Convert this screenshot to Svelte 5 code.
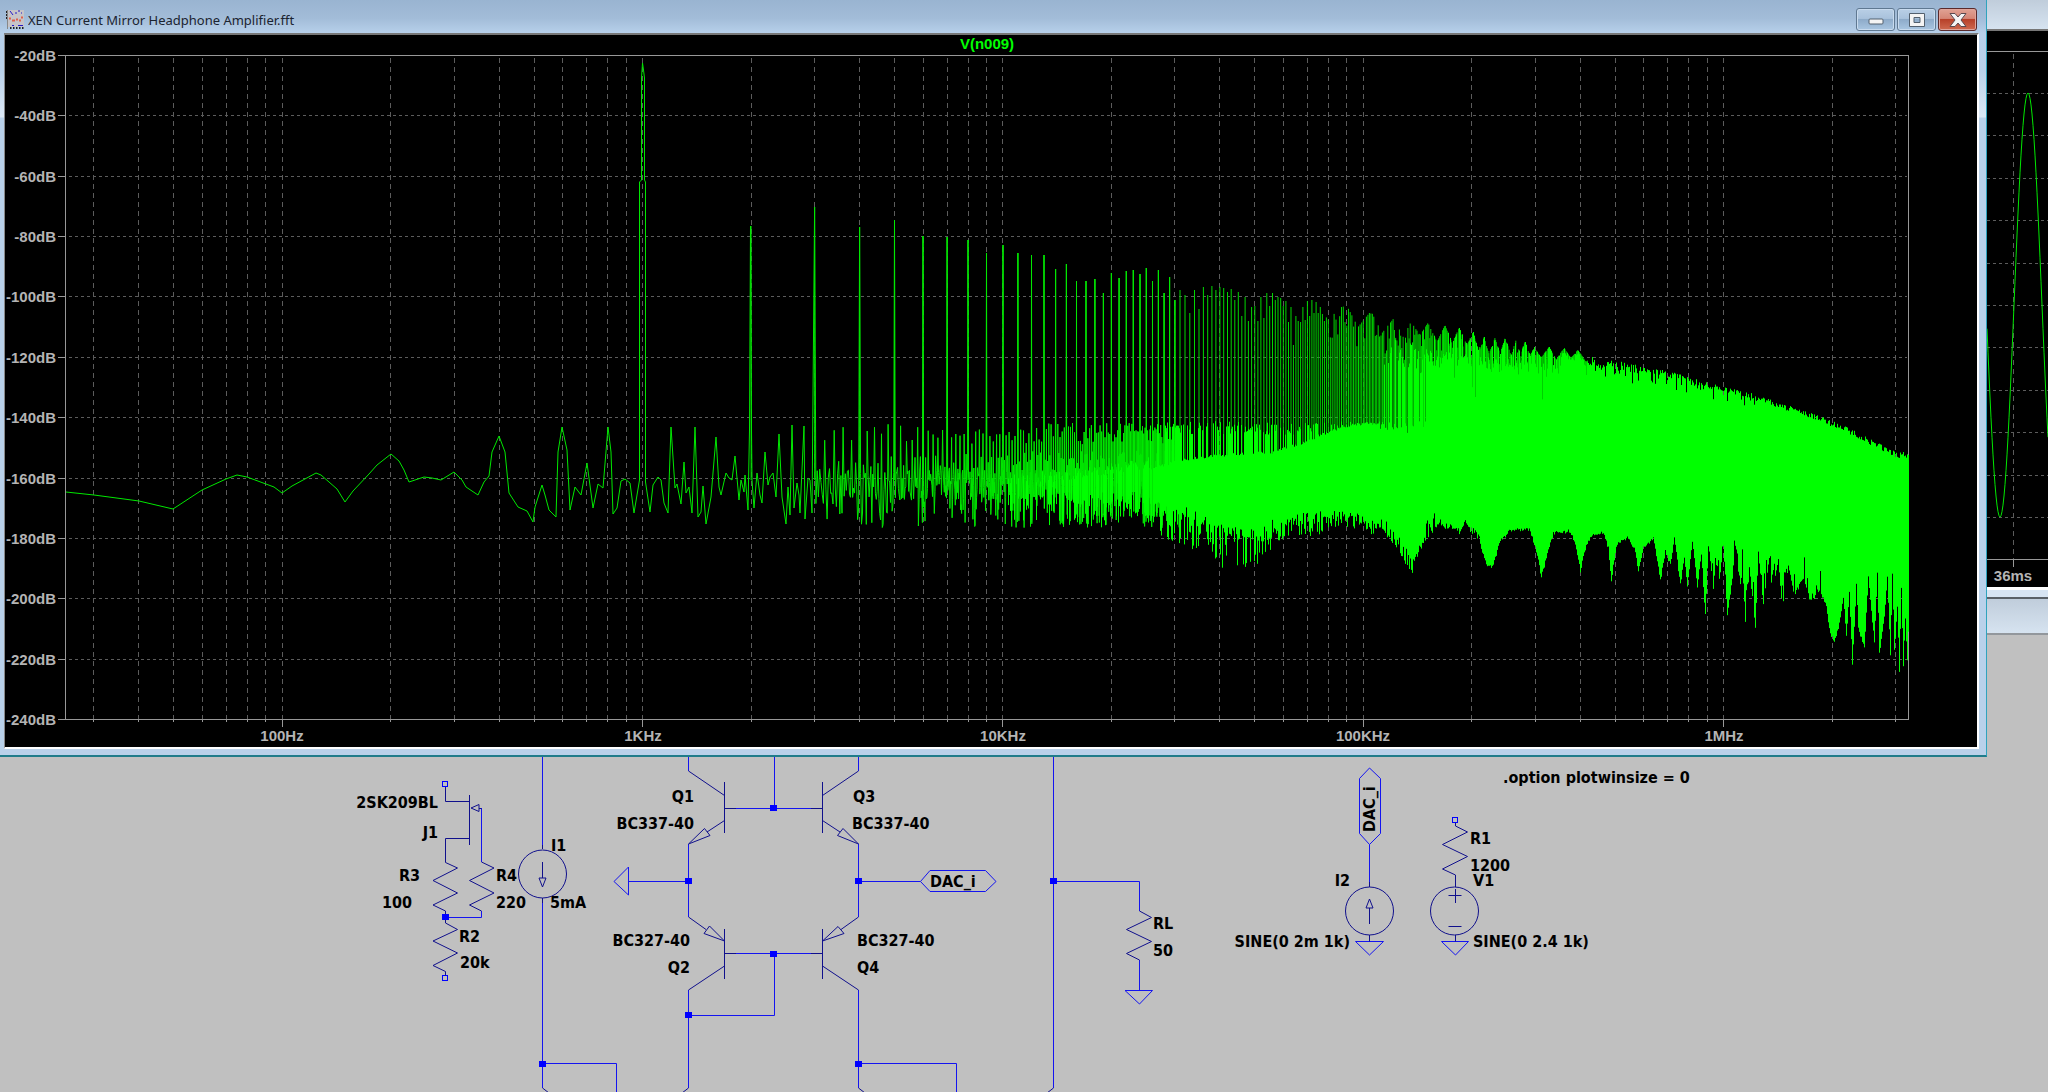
<script>
  const LEFT = 60;
  const TOP = 20;
  const PLOT_H = 664;
  const TRACE_W = 1844;
  const DECADE = 360.3;

  let canvasWidth = $state(1972);
  let plotWidth = $derived(Math.max(canvasWidth - 128, 200));
  let scale = $derived(plotWidth / TRACE_W);

  const freqX = (f) => (Math.log10(f) - Math.log10(24.93)) * DECADE;

  const dbLabels = Array.from({ length: 12 }, (_, i) => ({
    text: `${-20 - i * 20}dB`,
    y: TOP + Math.round((i * PLOT_H) / 11) + 0.5
  }));

  const grid = [];
  for (const base of [10, 100, 1e3, 1e4, 1e5, 1e6]) {
    for (let m = 1; m < 10; m++) {
      const f = base * m;
      if (f > 26 && f < 3.2e6) grid.push({ x: freqX(f), major: m === 1, f });
    }
  }
  const freqNames = { 100: '100Hz', 1000: '1KHz', 10000: '10KHz', 100000: '100KHz', 1000000: '1MHz' };

  let seed = 20931;
  const rnd = () => {
    seed = (seed * 1103515245 + 12345) % 2147483648;
    return seed / 2147483648;
  };

  const at = (table, x) => {
    if (x <= table[0][0]) return table[0][1];
    for (let i = 1; i < table.length; i++) {
      if (x <= table[i][0]) {
        const [x0, y0] = table[i - 1];
        const [x1, y1] = table[i];
        return y0 + ((y1 - y0) * (x - x0)) / (x1 - x0);
      }
    }
    return table[table.length - 1][1];
  };

  // Samples of the slow part of the spectrum, below 3 kHz.
  const low = [
    [66,492],[94,495],[139,501],[173,509],[202,490],[226,479],[237,475],[247,477],[274,487],[282,493],[292,486],[316,473],[321,475],[337,489],[345,502],
    [353,491],[369,474],[377,465],[391,454],[399,461],[404,470],[409,482],[424,477],[432,478],[441,480],[454,472],[462,480],[466,487],[478,495],[484,482],
    [489,476],[492,452],[499,436],[505,452],[509,493],[518,507],[527,511],[533,522],[535,507],[542,485],[545,495],[549,510],[556,517],[558,452],[562,427],
    [567,450],[570,510],[575,487],[581,495],[587,463],[593,508],[598,484],[603,488],[608,427],[611,452],[613,514],[617,508],[621,481],[625,479],[630,483],
    [634,513],[639.5,480],[639.5,182],[641.5,180],[641.5,78],[642.5,63],[643.5,70],[644.5,78],[644.5,180],[645.5,182],[645.5,482],[650,512],[653,485],
    [658,477],[661,480],
    [664,503],[668,513],[671,427],[675,488],[677,484],[681,504],[684,462],[686,493],[689,487],[692,513],[695,427],[698,517],[701,512],[703,486],[706,524],
    [711,497],[716,437],[719,487],[721,495],[726,473],[729,478],[732,480],[735,456],[739,500],[741,480],[744,492],[745,475],[748,510],[749.5,430],[750.5,226],
    [751.5,430],[752,480],[754,508],[757,473],[760,495],[762,503],[765,452],[768,485],[770,477],[773,473],[776,497],[779,434],[782,497],[786,524],[788,487],
    [790,515],[792,425],[794,508],[797,483],[799,495],[800,513],[804,426],[805,519],[808,478],[810,480],[812,513]
  ];

  const harmonicTops = [
    226,207,227,220,236,237,240,253,245,253,255,255,269,264,281,281,279,293,273,278,271,270,274,268,281,270,293,277,300,290,295,313,290,309,287,295,286,290,
    287,288,292,289,300,292,316,297,321,307,306,321,297,318,293,306,293,300,297,298,306,301,322,307,345,316,321,322,307,320,301,316,300,313,302,313,307,314,
    321
  ];

  const ceiling = [
    [1330,318],[1340,308],[1346,304],[1358,327],[1371,311],[1382,333],[1394,318],[1403,337],[1411,322],[1420,335],[1428,323],[1437,342],[1445,325],[1452,343],
    [1459,328],[1467,345],[1473,332],[1478,350],[1484,337],[1489,354],[1495,338],[1500,354],[1505,338],[1511,355],[1516,340],[1520,354],[1525,342],[1530,356],
    [1534,347],[1541,358],[1549,347],[1556,360],[1564,348],[1571,358],[1578,350],[1586,362],[1592,356],[1602,365],[1610,360],[1624,362],[1643,366],[1667,371],
    [1691,377],[1705,382],[1729,387],[1753,393],[1777,402],[1801,409],[1825,418],[1849,428],[1872,440],[1896,452],[1909,452]
  ];
  const coreTop = [
    [1003,484],[1060,482],[1120,474],[1150,468],[1175,460],[1200,456],[1250,451],[1270,452],[1300,442],[1330,430],[1355,423],[1400,420],[1420,390],[1430,358],
    [1440,351],[1470,352],[1500,358],[1560,362],[1600,364],[1643,371],[1691,381],[1729,391],[1777,405],[1825,421],[1872,443],[1896,454],[1909,454]
  ];
  const coreBottom = [[1003,497],[1120,498],[1160,500],[1190,508],[1215,522],[1250,524],[1280,518],[1300,513],[1335,509],[1360,514],[1380,524]];
  const floor = [
    [1003,525],[1131,529],[1158,537],[1171,543],[1198,551],[1216,564],[1223,573],[1231,584],[1238,570],[1260,565],[1265,553],[1283,542],[1292,533],[1312,540],
    [1329,527],[1348,530],[1362,527],[1371,537],[1379,528],[1395,547],[1403,562],[1412,573],[1419,553],[1429,537],[1438,527],[1459,537],[1465,527],[1479,543],
    [1486,567],[1492,569],[1500,543],[1510,532],[1529,531],[1536,553],[1541,579],[1548,553],[1553,535],[1570,533],[1576,550],[1580,573],[1586,547],[1591,537],
    [1603,535],[1608,550],[1611,583],[1616,547],[1627,540],[1634,550],[1638,573],[1643,550],[1653,540],[1656,557],[1660,583],[1665,553],[1670,567],[1674,540],
    [1680,587],[1684,560],[1687,587],[1692,543],[1697,590],[1701,555],[1705,623],[1708,547],[1713,592],[1715,560],[1719,582],[1723,547],[1727,618],[1732,580],
    [1735,548],[1740,593],[1742,570],[1745,622],[1749,570],[1755,628],[1758,555],[1763,608],[1769,560],[1772,597],[1778,562],[1782,612],[1788,568],[1794,597],
    [1803,580],[1810,603],[1820,593],[1826,607],[1829,632],[1834,645],[1839,626],[1843,600],[1846,639],[1849,593],[1852,667],[1856,587],[1858,630],[1864,651],
    [1868,580],[1874,645],[1877,574],[1879,655],[1884,620],[1887,580],[1890,658],[1892,574],[1894,653],[1897,610],[1899,673],[1901,590],[1903,667],[1905,620],
    [1907,664],[1909,607]
  ];

  const p = (x, y) => `${(x - 65).toFixed(1)} ${(y - 55).toFixed(1)}`;

  let line = 'M' + low.map(([x, y]) => p(x, y)).join('L');
  for (let n = 120; n < 1240; n++) {
    const f = n * 25;
    const x = 65 + freqX(f);
    let y = 470 + rnd() * 30;
    if (rnd() < 0.25) y = 496 + rnd() * 32;
    if (f % 200 === 0) y = 423 + rnd() * 22;
    else if (f % 100 === 0) y = 450 + rnd() * 25;
    if (f % 1000 === 0) y = harmonicTops[f / 1000 - 2];
    line += 'L' + p(x, y);
  }

  let spikes = '';
  for (let k = 2; k < 420; k++) {
    const x = 65 + freqX(k * 1000);
    const top =
      k - 2 < harmonicTops.length ? harmonicTops[k - 2] : x < 1330 ? 303 + rnd() * 22 : at(ceiling, x) + (rnd() < 0.5 ? rnd() * 26 : 0);
    spikes += `M${p(x, top)}V425`;
  }

  let mass = '';
  for (let x = 1003; x < 1909; x++) {
    if (x < 1170 && rnd() > 0.25 + ((x - 1003) / 167) * 0.7) continue;
    const cTop = at(coreTop, x);
    const cBottom = at(coreBottom, x);
    const edge = at(floor, x);
    let top = cTop + rnd() * 3;
    let bottom = edge;
    if (x < 1150) {
      top = cTop - rnd() * 12;
    } else if (x < 1380) {
      if (rnd() < 0.6) top = Math.min(top, 421 + rnd() * 14);
    } else if (x < 1432) {
      top = rnd() < 0.15 + (x - 1380) / 62 ? at(ceiling, x) + 18 + rnd() * 22 : 421 + rnd() * 12;
    } else if (x < 1560) {
      if (rnd() < 0.5) top = at(ceiling, x);
      else top += rnd() * 14;
      if (rnd() < 0.06) top = cTop + rnd() * 50;
    } else {
      top = at(ceiling, x) + rnd() * 6;
      if (x < 1760 && rnd() < 0.25) top += rnd() * 14;
    }
    if (x < 1380) bottom = cBottom + (edge - cBottom) * (rnd() < 0.6 ? 0.3 + rnd() * 0.7 : rnd() * 0.35);
    else if (x < 1440) bottom -= rnd() * 20 * (rnd() < 0.5 ? 1 : 0.2);
    else if (x < 1480) bottom -= rnd() * 9;
    else bottom -= rnd() * 4;
    if (x > 1690 && x < 1830 && rnd() < 0.3) bottom -= rnd() * 25;
    mass += `M${p(x + 0.5, top)}V${(bottom - 55).toFixed(1)}`;
  }

  let sine = '';
  for (let x = 0; x <= 61; x++) {
    sine += `${x ? 'L' : 'M'}${x} ${(274 + 212 * Math.cos(((x - 13) * Math.PI) / 28)).toFixed(1)}`;
  }
  const sideRows = Array.from({ length: 11 }, (_, i) => Math.round(62 + i * 42.4) + 0.5);

  const joints = [[542.5,313.5],[445.5,167],[688.5,131],[688.5,265],[774,58],[774,203.5],[858.5,131],[858.5,313.5],[1053.5,131]];
  const pins = [[445,33.5],[445,228],[1455,70]];
  const labels = [
    ['2SK209BL',438,58,1],['J1',438,88,1],['R3',420,131,1],['100',412,158,1],['R4',496,131,0],['220',496,158,0],['I1',551,101,0],['5mA',550,158,0],
    ['R2',459,192,0],['20k',460,218,0],['Q1',694,52,1],['BC337-40',694,79,1],['Q3',853,52,0],['BC337-40',852,79,0],['BC327-40',690,196,1],['Q2',690,223,1],
    ['BC327-40',857,196,0],['Q4',857,223,0],['DAC_i',930,137,0],['RL',1153,179,0],['50',1153,206,0],['I2',1350,136,1],['SINE(0 2m 1k)',1350,197,1],
    ['R1',1470,94,0],['1200',1470,121,0],['V1',1473,136,0],['SINE(0 2.4 1k)',1473,197,0],['.option plotwinsize = 0',1503,33,0]
  ];
</script>

<main>
  <div class="windows">
    <section class="window" aria-label="XEN Current Mirror Headphone Amplifier.fft">
      <header>
        <svg class="doc" width="18" height="20" viewBox="0 0 18 20" aria-hidden="true">
          <path d="M2 0H18V17H2z" fill="#c6c4c8" />
          <path d="M0 2h2M0 5h2M0 8h2" stroke="#222" stroke-width="2" />
          <path d="M1.500 0V19" stroke="#888" />
          <path d="M4 1l3 4M9 3h2M12 1h2M15 3h1M6 15.500h2M12 15.500h5" stroke="#2418c8" fill="none" />
          <path d="M3 8.500h2M6 10.500h3M10 9.500h2M13 10.500h2M15 7.500h2" stroke="#e0604c" stroke-width="2" />
          <path d="M4 18h14" stroke="#222" stroke-width="2" stroke-dasharray="1.500 1.500" />
        </svg>
        <h1>XEN Current Mirror Headphone Amplifier.fft</h1>
        <button type="button" aria-label="Minimize">
          <svg width="16" height="16" viewBox="0 0 16 16"><rect x="1" y="7" width="14" height="5" rx="1" fill="#f4f4f4" stroke="#53606e" /></svg>
        </button>
        <button type="button" aria-label="Maximize">
          <svg width="16" height="16" viewBox="0 0 16 16"><path fill-rule="evenodd" d="M.5 1.500h15v13H.500zM5 5.500v5h6v-5z" fill="#f4f4f4" stroke="#53606e" /></svg>
        </button>
        <button type="button" class="close" aria-label="Close">
          <svg width="18" height="16" viewBox="0 0 18 16"><path d="M1 1.500h5l3 3.500 3-3.500h5L12 8l5 6.500h-5L9 11l-3 3.500H1L6 8z" fill="#f4f4f4" stroke="#5a4a50" /></svg>
        </button>
      </header>
      <div class="canvas" bind:clientWidth={canvasWidth}>
        <svg width="100%" height="712" role="img" aria-label="FFT of V(n009)">
          <text class="trace-name" x={LEFT + plotWidth / 2} y="14" text-anchor="middle">V(n009)</text>
          {#each grid as g}
            <path class="dash-v" d="M{Math.floor(LEFT + g.x * scale) + 0.5} {TOP + 3}V{TOP + PLOT_H}" />
            <path class="axis" d="M{Math.floor(LEFT + g.x * scale) + 0.5} {TOP + PLOT_H}v{g.major ? 8 : 3}" />
            {#if g.major}
              <text class="scale" x={Math.round(LEFT + g.x * scale)} y="706" text-anchor="middle">{freqNames[g.f]}</text>
            {/if}
          {/each}
          {#each dbLabels as l, i}
            {#if i > 0 && i < 11}
              <path class="dash-h" d="M{LEFT + 4} {l.y}H{LEFT + plotWidth - 2}" />
            {/if}
            <path class="axis" d="M{LEFT - 7} {l.y}h8" />
            <text class="scale" x="51" y={l.y + 5} text-anchor="end">{l.text}</text>
          {/each}
          <rect class="axis" x={LEFT + 0.5} y={TOP + 0.5} width={plotWidth - 1} height={PLOT_H} />
          <svg x={LEFT} y={TOP} width={plotWidth} height={PLOT_H} viewBox="0 0 {TRACE_W} {PLOT_H}" preserveAspectRatio="none">
            <path class="spikes" d={spikes} />
            <path class="line" d={line} />
            <path class="mass" d={mass} />
          </svg>
        </svg>
      </div>
    </section>

    <aside>
      <div class="side-title"></div>
      <svg width="61" height="556" role="img" aria-label="Waveform plot">
        <path class="dash-v" d="M26.500 23V528" />
        {#each sideRows as y}
          <path class="dash-h" d="M0 {y}H61" />
        {/each}
        <path class="axis" d="M0 20.500H61M0 528.500H61M26.500 528v8" />
        <path class="line" d={sine} />
        <text class="scale" x="26" y="550" text-anchor="middle">36ms</text>
      </svg>
      <div class="side-edge"></div>
      <div class="side-title lower"></div>
    </aside>
  </div>

  <svg class="schematic" width="100%" height="335" role="img" aria-label="Amplifier schematic">
    <g transform="translate(0 -7)">
      <path class="wire" d="M542.500 7V95M542.500 148V338M542.500 313.500H616.500V343M481.500 58V112M481.500 161V167.500H445.500M688.500 7V21M688.500 94V167M688.500 131.500H628M628.500 117V145L614 131.500zM774.500 7V58M736 58.500H811M736 203.500H811M774.500 203.500V265.500H688.500M688.500 240V338M858.500 7V21M858.500 94V167M858.500 131.500H920.500L930 120.500H985.500L996 131.500L985.500 141.500H930L920.500 131.500M858.500 240V338M858.500 313.500H956.500V343M1053.500 7V338M1053.500 131.500H1139.500V161M1139.500 210V240.500M1125 240.500H1152.500L1139.500 254zM1369.500 18L1380.500 28.500V83.500L1369.500 94.500L1359.500 83.500V28.500zM1369.500 94.500V132M1355.500 191.500H1383.500L1369.500 205zM1441.500 191.500H1468.500L1455.500 205z" />
      <path class="part" d="M445.500 36V51.500H469.500M469.500 45V95M469.500 88.500H445.500V112.500L457.500 118L433 130.500L457.500 143L433 155L445.500 161V173L457.500 179.500L433 191L457.500 203L433 215.500L445.500 221.500V226M471 58L479 54.500V61.500zM479 58.500H481.500M481.500 112L494 118L469.500 130.500L494 143L469.500 155L481.500 161M542.500 95V99M542.500 148V153M542.500 112V128M539 128H546L542.500 137zM542.500 338L549 343" />
      <circle class="part" cx="542.500" cy="124" r="24" />
      <path class="part" d="M688.500 21L724.500 45.500M724.500 32V83M724.500 58.500H736M724.500 70.500L707 82M688.500 94L704.500 78.500L710 85.500zM688.500 167L706 179.500M724.500 191L709.500 176L704 183.500zM724.500 179V229M724.500 203.500H736M724.500 216L688.500 240M688.500 338L682 343M858.500 21L822.500 45.500M822.500 32V83M822.500 58.500H811M822.500 70.500L840 82M858.500 94L843 78.500L837.500 85.500zM858.500 167L841 179.500M822.500 191L838 176.500L844 183.500zM822.500 179V229M822.500 203.500H811M822.500 216L858.500 240M858.500 338L865 343M1053.500 338L1047 343" />
      <path class="part" d="M1139.500 161L1151.500 167.500L1126.500 179.500L1151.500 191.500L1126.500 203.500L1139.500 210M1369.500 132V137M1369.500 185V191.500M1369.500 158V174M1366 158H1373L1369.500 149zM1455.500 72V76L1467.500 82L1442.500 94.500L1467.500 106.500L1442.500 119L1455.500 125V137M1448.500 145.500H1461.500M1455.500 139V153M1448.500 176.500H1461.500M1455.500 185V191.500" />
      <circle class="part" cx="1369.500" cy="161" r="24" />
      <circle class="part" cx="1454.500" cy="161" r="24" />
      {#each joints as [x, y]}
        <rect class="joint" x={Math.round(x) - 4} y={Math.round(y) - 3} width="7" height="6" />
      {/each}
      {#each pins as [x, y]}
        <rect class="pin" x={x - 2.5} y={Math.round(y) - 2.5} width="5" height="5" />
      {/each}
      {#each labels as [text, x, y, end]}
        <text {x} {y} text-anchor={end ? 'end' : 'start'}>{text}</text>
      {/each}
      <text transform="translate(1375 82) rotate(-90)">DAC_i</text>
    </g>
  </svg>
</main>

<style>
  :global(body) {
    margin: 0;
    background: #c0c0c0;
  }
  main {
    min-height: 100vh;
    display: flex;
    flex-direction: column;
    background: #c0c0c0;
    overflow: hidden;
    font-family: "Noto Sans", "Open Sans", sans-serif;
  }
  svg {
    display: block;
  }
  .windows {
    display: flex;
    align-items: flex-start;
  }
  .window {
    flex: 1;
    min-width: 0;
    box-sizing: border-box;
    padding: 0 7px 6px 4px;
    border-right: 1px solid #2fa3bd;
    border-bottom: 2px solid #1f7c8a;
    background: linear-gradient(#99b4d1 0, #a2bcd8 18px, #b7d0ea 33px, #b9d1ea 70px, #dce9f6 117px, #b9d1ea 118px);
  }
  header {
    height: 33px;
    box-sizing: border-box;
    padding: 6px 2px 0 2px;
    display: flex;
    align-items: center;
    gap: 2px;
  }
  h1 {
    flex: 1;
    margin: 0 0 0 2px;
    font-size: 13px;
    line-height: 20px;
    font-weight: 400;
    color: #1b2430;
    white-space: nowrap;
    overflow: hidden;
  }
  button {
    width: 39px;
    height: 23px;
    padding: 0;
    display: flex;
    align-items: center;
    justify-content: center;
    border: 1px solid #5f7891;
    border-radius: 3px;
    box-shadow: inset 0 0 0 1px #c9dbee;
    background: linear-gradient(#b9cfe6 0, #a9c2dc 45%, #8eabc9 50%, #a9c6e2 100%);
  }
  button.close {
    border-color: #5a2a2c;
    box-shadow: inset 0 0 0 1px #dfa59c;
    background: linear-gradient(#e0a294 0, #d58676 45%, #b7412a 50%, #cf6a50 100%);
  }
  .canvas {
    border: 0 solid #fff;
    border-width: 2px 2px 2px 1px;
    border-top-color: #777;
    border-left-color: #888;
    background: #000;
  }
  .scale,
  .trace-name {
    font: 700 15px "Liberation Sans", sans-serif;
    fill: #b4b4b4;
  }
  .trace-name {
    fill: #00ff00;
  }
  .axis {
    fill: none;
    stroke: #989898;
  }
  .dash-v,
  .dash-h {
    fill: none;
    stroke: #5c5c5c;
    stroke-dasharray: 5 4;
  }
  .dash-h {
    stroke-dasharray: 3 3;
  }
  .line,
  .spikes,
  .mass {
    fill: none;
    stroke: #00ff00;
    stroke-linejoin: bevel;
  }
  .line {
    stroke: #00e800;
  }
  .spikes {
    stroke: #00d800;
  }
  aside {
    width: 61px;
    flex: none;
  }
  aside svg {
    background: #000;
  }
  .side-title {
    height: 29px;
    border-bottom: 2px solid #777;
    background: linear-gradient(#c0cddb, #d6e3f0);
  }
  .side-edge {
    height: 7px;
    border-top: 3px solid #fff;
    border-bottom: 2px solid #5a6066;
    background: #d7e4f2;
  }
  .side-title.lower {
    height: 34px;
    border-bottom-color: #92979c;
  }
  .schematic {
    flex: 1;
    min-height: 335px;
  }
  .schematic text {
    font: 700 16px "DejaVu Sans Condensed", "Noto Sans", sans-serif;
    fill: #000;
  }
  .wire {
    fill: none;
    stroke: #1414f0;
  }
  .part {
    fill: none;
    stroke: #10108c;
  }
  .joint {
    fill: #0000ff;
  }
  .pin {
    fill: #c0c0c0;
    stroke: #0000ff;
  }
</style>
